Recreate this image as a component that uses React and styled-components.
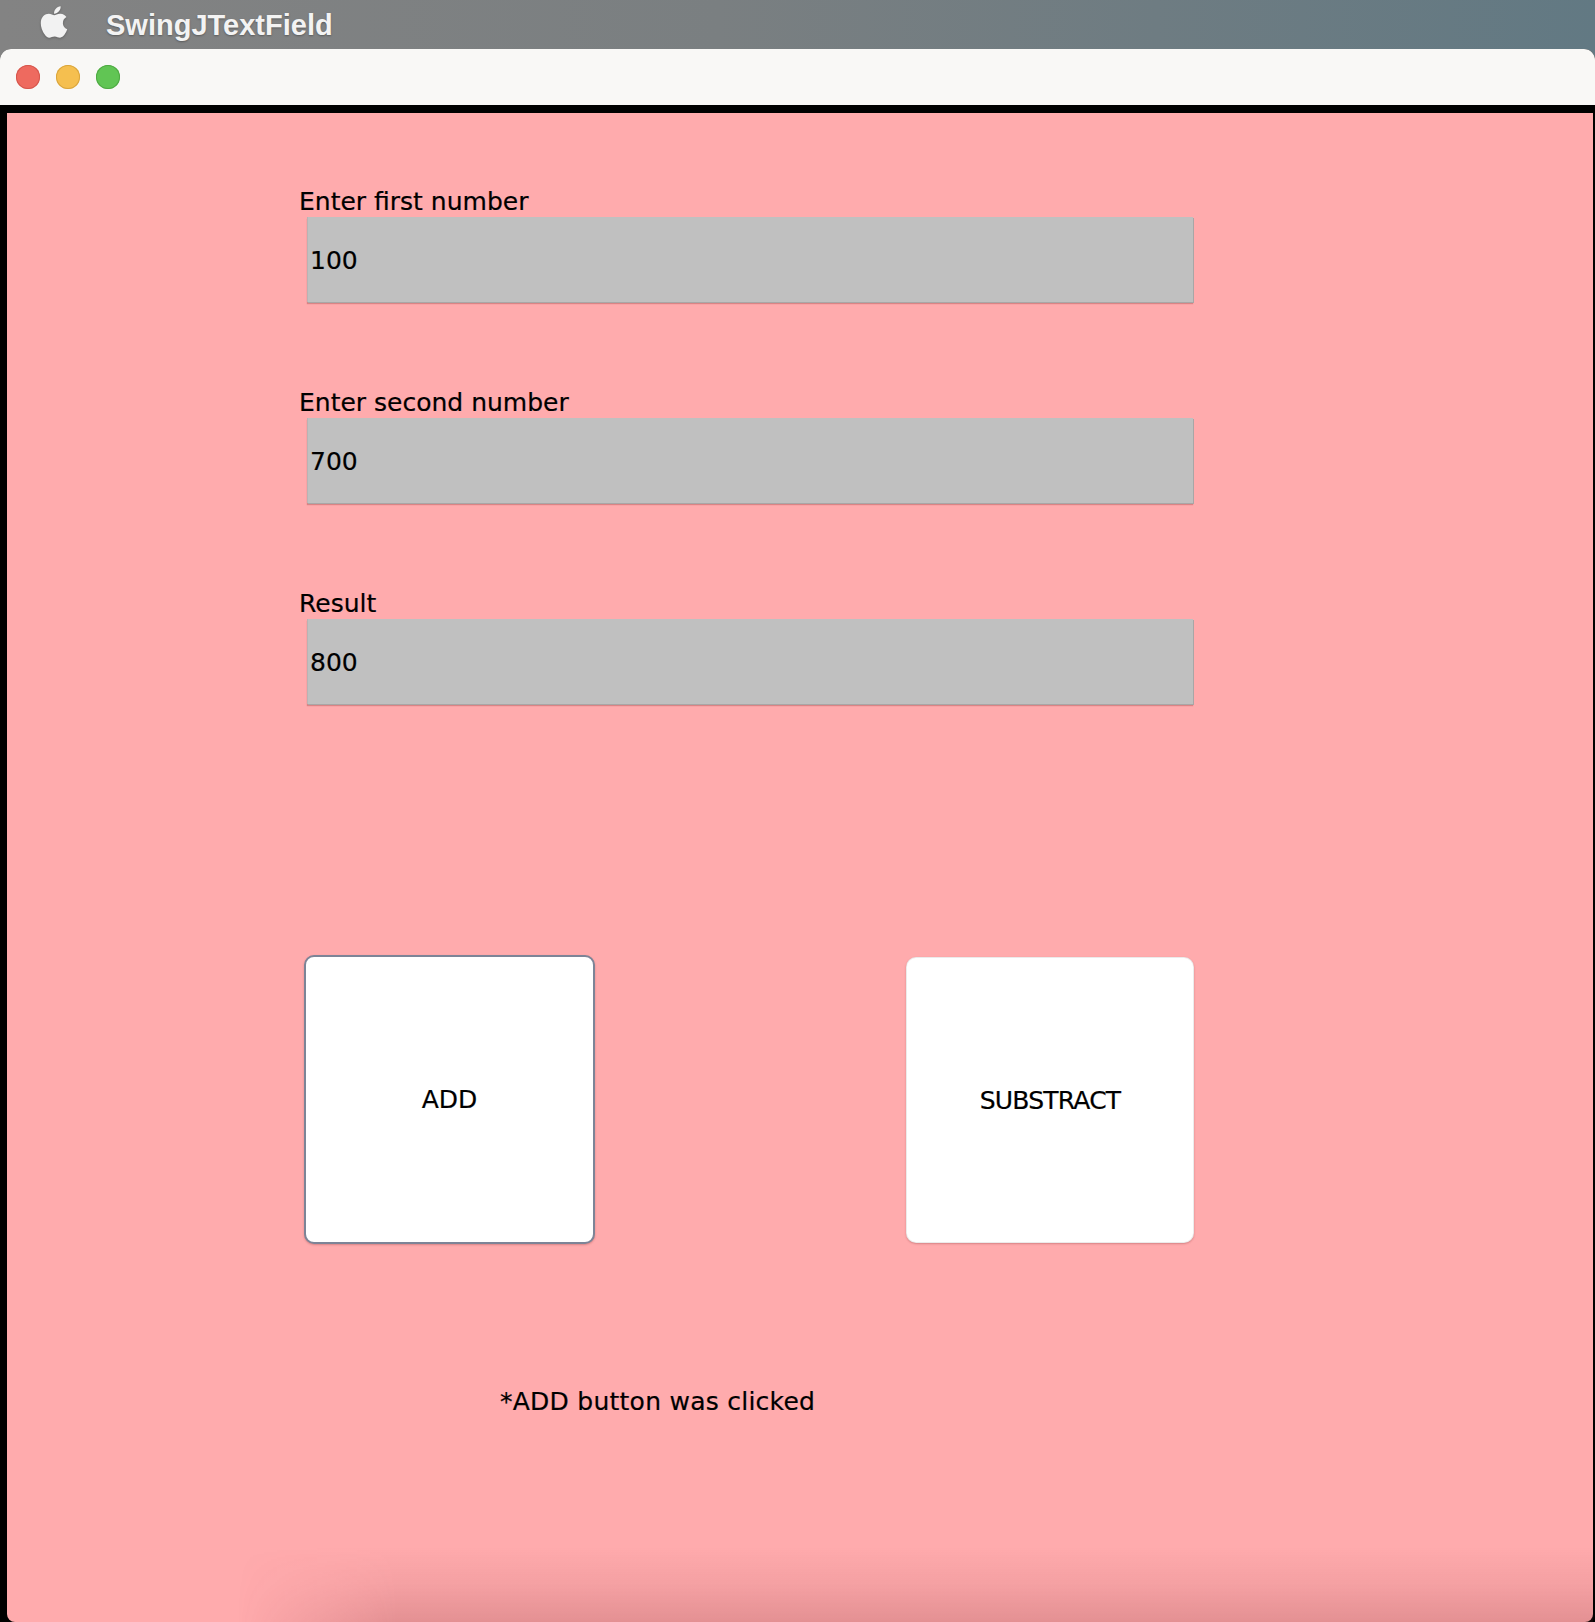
import React from 'react'
import styled, { createGlobalStyle } from 'styled-components'
import { FaApple } from 'react-icons/fa'

const GlobalStyle = createGlobalStyle`
  html, body {
    margin: 0;
    padding: 0;
    background: #1d1d1d;
  }
  * {
    box-sizing: border-box;
  }
`

const App = () => {
  return (
    <Screen>
      <GlobalStyle />
      <MenuBar>
        <AppleMark><FaApple size={36} /></AppleMark>
        <AppName>SwingJTextField</AppName>
      </MenuBar>
      <Window>
        <TitleBar>
          <Light color="#ee6a5f" ring="#d5574d" />
          <Light color="#f5bf4f" ring="#d9a53d" />
          <Light color="#61c554" ring="#4fa943" />
        </TitleBar>
        <Content>
          <Form>
            <Group>
              <Label>Enter first number</Label>
              <Field>100</Field>
            </Group>
            <Group>
              <Label>Enter second number</Label>
              <Field>700</Field>
            </Group>
            <Group>
              <Label>Result</Label>
              <Field>800</Field>
            </Group>
          </Form>
          <ButtonRow>
            <Btn focused>ADD</Btn>
            <Btn tight>SUBSTRACT</Btn>
          </ButtonRow>
          <Status>*ADD button was clicked</Status>
        </Content>
      </Window>
    </Screen>
  )
}

const Screen = styled.div`
  width: 1595px;
  height: 1622px;
  display: flex;
  flex-direction: column;
  overflow: hidden;
  background: linear-gradient(to right, #838383 0%, #7a7f81 45%, #627983 100%);
`

const MenuBar = styled.div`
  height: 49px;
  flex-shrink: 0;
  display: flex;
  align-items: center;
  padding-left: 36px;
`

const AppleMark = styled.div`
  display: flex;
  align-self: flex-start;
  margin-top: 4px;
  color: #f2f2f2;
  filter: drop-shadow(0 1px 1px rgba(0, 0, 0, 0.25));
`

const AppName = styled.div`
  margin-left: 34px;
  font-family: "Liberation Sans", Arial, sans-serif;
  font-weight: 700;
  font-size: 29px;
  line-height: 32px;
  color: #f3f3f3;
  text-shadow: 0 1px 2px rgba(0, 0, 0, 0.3);
`

const Window = styled.div`
  flex: 1;
  display: flex;
  flex-direction: column;
  background: #000;
  border-radius: 11px 11px 0 0;
  overflow: hidden;
`

const TitleBar = styled.div`
  height: 56px;
  flex-shrink: 0;
  display: flex;
  align-items: center;
  gap: 16px;
  padding-left: 16px;
  background: #f9f8f6;
`

const Light = styled.span`
  width: 24px;
  height: 24px;
  border-radius: 50%;
  background: ${p => p.color};
  box-shadow: inset 0 0 0 1px ${p => p.ring};
`

const Content = styled.div`
  position: relative;
  flex: 1;
  margin: 8px 2px 0 7px;
  padding: 74px 0 0 292px;
  display: flex;
  flex-direction: column;
  align-items: flex-start;
  background: #ffabad;
  border-radius: 0 0 8px 8px;
  font-family: "DejaVu Sans", Verdana, sans-serif;
  font-size: 25px;
  color: #000;
  -webkit-text-stroke: 0.2px #000;

  &::after {
    content: '';
    position: absolute;
    left: 0;
    right: 0;
    bottom: 0;
    height: 75px;
    background: linear-gradient(to bottom, rgba(120, 40, 45, 0) 0%, rgba(120, 40, 45, 0.08) 50%, rgba(120, 40, 45, 0.2) 100%);
    -webkit-mask-image: linear-gradient(to right, transparent 230px, #000 390px);
    mask-image: linear-gradient(to right, transparent 230px, #000 390px);
    pointer-events: none;
  }
`

const Form = styled.div`
  display: flex;
  flex-direction: column;
  gap: 86px;
`

const Group = styled.div`
  display: flex;
  flex-direction: column;
`

const Label = styled.div`
  line-height: 30px;
  height: 30px;
`

const Field = styled.div`
  margin-left: 8px;
  width: 886px;
  height: 85px;
  display: flex;
  align-items: center;
  padding: 3px 0 0 2px;
  line-height: 30px;
  background: #c0c0c0;
  border-left: 1px solid #b9b3b3;
  box-shadow: 1px 1px 0 #a9a6a6, 0 2px 1px rgba(150, 60, 60, 0.35);
`

const ButtonRow = styled.div`
  margin: 251px 0 0 5px;
  width: 890px;
  display: flex;
  justify-content: space-between;
`

const Btn = styled.button`
  width: ${p => (p.focused ? '291px' : '288px')};
  height: ${p => (p.focused ? '289px' : '286px')};
  margin-top: ${p => (p.focused ? '0' : '2px')};
  background: #fff;
  border: ${p => (p.focused ? '2px solid #7d8497' : '1px solid rgba(0, 0, 0, 0.08)')};
  border-radius: 10px;
  box-shadow: 0 1px 2px rgba(120, 40, 40, 0.3);
  font-family: "DejaVu Sans", Verdana, sans-serif;
  font-size: 25px;
  letter-spacing: ${p => (p.tight ? '-0.8px' : '0')};
  -webkit-text-stroke: 0.2px #000;
  color: #000;
  padding: 0;
  cursor: pointer;
`

const Status = styled.div`
  margin: 143px 0 0 201px;
  line-height: 30px;
  letter-spacing: 0.25px;
`

export default App
